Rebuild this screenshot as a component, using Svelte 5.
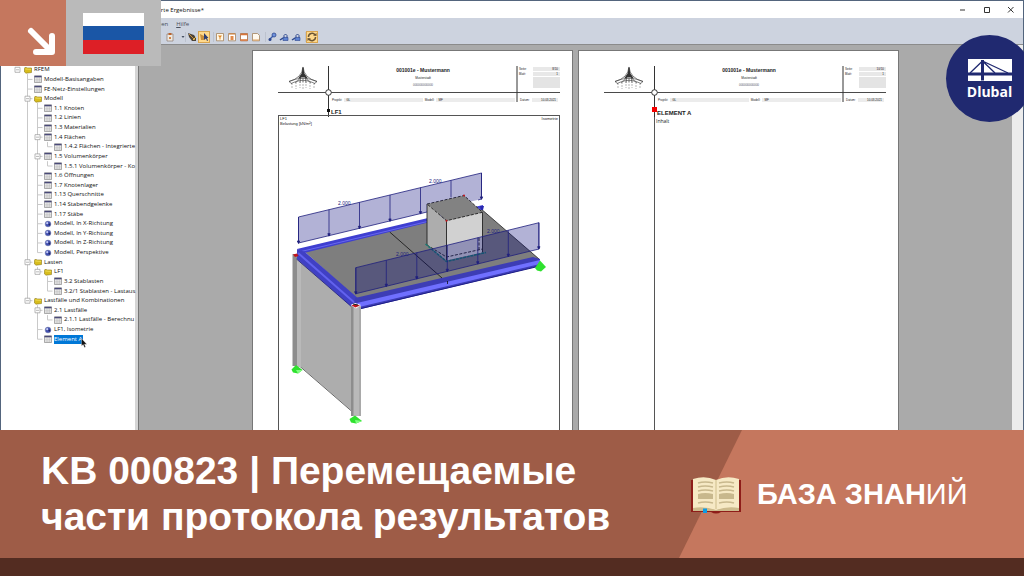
<script>
  const rows = [
    { level: 0, type: 'folder', text: 'RFEM', open: true },
    { level: 1, type: 'table', text: 'Modell-Basisangaben' },
    { level: 1, type: 'table', text: 'FE-Netz-Einstellungen' },
    { level: 1, type: 'folder', text: 'Modell', open: true },
    { level: 2, type: 'table', text: '1.1 Knoten' },
    { level: 2, type: 'table', text: '1.2 Linien' },
    { level: 2, type: 'table', text: '1.3 Materialien' },
    { level: 2, type: 'table', text: '1.4 Flächen', open: true },
    { level: 3, type: 'table', text: '1.4.2 Flächen - Integrierte' },
    { level: 2, type: 'table', text: '1.5 Volumenkörper', open: true },
    { level: 3, type: 'table', text: '1.5.1 Volumenkörper - Ko' },
    { level: 2, type: 'table', text: '1.6 Öffnungen' },
    { level: 2, type: 'table', text: '1.7 Knotenlager' },
    { level: 2, type: 'table', text: '1.13 Querschnitte' },
    { level: 2, type: 'table', text: '1.14 Stabendgelenke' },
    { level: 2, type: 'table', text: '1.17 Stäbe' },
    { level: 2, type: 'view', text: 'Modell, In X-Richtung' },
    { level: 2, type: 'view', text: 'Modell, In Y-Richtung' },
    { level: 2, type: 'view', text: 'Modell, In Z-Richtung' },
    { level: 2, type: 'view', text: 'Modell, Perspektive' },
    { level: 1, type: 'folder', text: 'Lasten', open: true },
    { level: 2, type: 'folder', text: 'LF1', open: true },
    { level: 3, type: 'table', text: '3.2 Stablasten' },
    { level: 3, type: 'table', text: '3.2/1 Stablasten - Lastaus' },
    { level: 1, type: 'folder', text: 'Lastfälle und Kombinationen', open: true },
    { level: 2, type: 'table', text: '2.1 Lastfälle', open: true },
    { level: 3, type: 'table', text: '2.1.1 Lastfälle - Berechnu' },
    { level: 2, type: 'view', text: 'LF1, Isometrie' },
    { level: 2, type: 'table', text: 'Element A', selected: true }
  ];

  // Each row's elbow runs up to its parent row, in row units.
  const parentOf = (i) => {
    let p = i - 1;
    while (p >= 0 && rows[p].level >= rows[i].level) p--;
    return p;
  };

  const tools = [
    { kind: 'clip', name: 'Einfügen' },
    { kind: 'arrow', name: 'Auswahl' },
    { kind: 'gap' },
    { kind: 'pick', name: 'Zeiger' },
    { kind: 'hand', name: 'Verschieben', active: true },
    { kind: 'gap' },
    { kind: 'filter', name: 'Filter' },
    { kind: 'page', name: 'Seite' },
    { kind: 'head', name: 'Kopf' },
    { kind: 'blank', name: 'Leere Seite' },
    { kind: 'gap' },
    { kind: 'link', name: 'Verknüpfen' },
    { kind: 'lock', name: 'Sperren' },
    { kind: 'lock', name: 'Entsperren' },
    { kind: 'gap' },
    { kind: 'sync', name: 'Aktualisieren', active: true }
  ];

  const backDiv = [0, 1, 2, 3, 4, 5, 6].map((i) => ({ x: 298.5 + i * 30.5, y: 217 - i * 7.35 }));
  const frontDiv = [0, 1, 2, 3, 4, 5, 6].map((i) => ({ x: 355.8 + i * 30.5, y: 267.7 - i * 7.5 }));
</script>

{#snippet pageHead(no)}
  <header class="head">
    <svg class="rules" viewBox="0 0 282 52" aria-hidden="true">
      <path d="M0 27.5H282" stroke="#4a4a4a" stroke-width="1" />
      <path d="M50.5 1V52M239 1V37" stroke="#333" stroke-width="1" />
      <circle cx="50.5" cy="27.5" r="2.8" fill="#fff" stroke="#333" />
      <g fill="none" stroke="#333" stroke-width=".6">
        <path d="M25 2Q24 13 11 16.500L14 19M25 2Q26 13 39 16.500L36 19M11 16.500Q25 10 39 16.500M13 18.500Q25 12 37 18.500M25 3Q25 13 17 18M25 3Q25 13 33 18M23 10L22 18M27 10L28 18M25 10V17" />
        <path d="M14 18V23M18 17V24M22 16V23M25 16V25M28 16V23M32 17V24M36 18V23" stroke="#888" stroke-dasharray="2 1" />
      </g>
      <path d="M25 1.500L23.700 8.500L20 13.500L25 12L30 13.500L26.300 8.500Z" fill="#333" />
    </svg>
    <div class="title">
      <strong>001001e - Mustermann</strong>
      <span>Musterstadt</span>
      <span class="phone">000000000000</span>
    </div>
    <dl class="meta">
      <div><dt>Seite:</dt><dd>{no}</dd></div>
      <div><dt>Blatt:</dt><dd>1</dd></div>
      <div class="stamp"></div>
    </dl>
    <div class="project">
      <span>Projekt:</span><span class="fill">GL</span>
      <span>Modell:</span><span class="fill">MF</span>
    </div>
    <div class="date"><span>Datum:</span><span class="fill">10.03.2021</span></div>
  </header>
{/snippet}

<div class="shell">
  <section class="app">
    <div class="titlebar">
      <span class="name">Exportierte Ergebnisse*</span>
      <div class="winbtns">
        <button aria-label="Minimieren"><svg viewBox="0 0 8 8"><path d="M1 4H6" /></svg></button>
        <button aria-label="Maximieren"><svg viewBox="0 0 8 8"><path d="M1.500 1.500H6.500V6.500H1.500Z" /></svg></button>
        <button aria-label="Schließen"><svg viewBox="0 0 8 8"><path d="M1 1L6.500 6.500M6.500 1L1 6.500" /></svg></button>
      </div>
    </div>
    <nav class="menu"><a href="#extras">Extras öffnen</a><a href="#hilfe"><u>H</u>ilfe</a></nav>
    <div class="toolbar">
      {#each tools as t}
        {#if t.kind === 'gap'}
          <i class="sep"></i>
        {:else}
          <button class:active={t.active} class:narrow={t.kind === 'arrow'} aria-label={t.name}>
            <svg viewBox="0 0 10 10">
              {#if t.kind === 'clip'}
                <path d="M2 2H8V9H2Z" fill="#eee9e2" stroke="#8b7a6d" stroke-width=".7" /><path d="M3.500 1H6.500V3H3.500Z" fill="#b9622d" /><path d="M4 5H6V7H4Z" fill="#d08447" />
              {:else if t.kind === 'arrow'}
                <path d="M1.500 4H4.500L3 6Z" fill="#444e60" />
              {:else if t.kind === 'pick'}
                <path d="M1 1L7 3L9 6V9H5L2 5Z" fill="#4b4338" /><path d="M2 2L8 8" stroke="#c98f3c" /><path d="M6 8L9 5" stroke="#e9c04f" />
              {:else if t.kind === 'hand'}
                <path d="M1 2L5 4V8H2Z" fill="#c98f3c" /><path d="M5 1V8L7 6.500L8 9L9 8.500L8 6H9.500Z" fill="#2d3c71" />
              {:else if t.kind === 'filter'}
                <path d="M1.500 1.500H8.500V8.800H1.500Z" fill="#fff7e6" stroke="#a3835e" stroke-width=".8" /><path d="M3 3.500H7L5.500 5.500V7.500H4.500V5.500Z" fill="#e08a2a" />
              {:else if t.kind === 'page'}
                <path d="M1.500 1.500H8.500V8.800H1.500Z" fill="#fff" stroke="#a3835e" stroke-width=".8" /><path d="M3.500 4H6.500V8H3.500Z" fill="#e08a4a" /><path d="M2 2H8" stroke="#cf7a31" />
              {:else if t.kind === 'head'}
                <path d="M1.500 1.500H8.500V8.800H1.500Z" fill="#fff" stroke="#a3663e" stroke-width=".8" /><path d="M1.500 2.500H8.500M1.500 8H8.500" stroke="#d9753a" stroke-width="1.500" />
              {:else if t.kind === 'blank'}
                <path d="M1.500 1.500H6.500L8.500 3.500V8.800H1.500Z" fill="#fff9ef" stroke="#a3835e" stroke-width=".8" /><path d="M2 8H8" stroke="#e3a35e" />
              {:else if t.kind === 'link'}
                <path d="M2.500 7.500L7.500 2.500" stroke="#3d5fae" stroke-width="1.500" /><circle cx="7" cy="3" r="2" fill="#6f92dc" stroke="#2d478e" stroke-width=".8" /><circle cx="3" cy="7.500" r="1.500" fill="#2d478e" />
              {:else if t.kind === 'lock'}
                <path d="M5 6V3.500Q6.500 .5 8 3.500V6" fill="none" stroke="#2d478e" /><path d="M4 5.500H9V8.500H4Z" fill="#5e83d2" stroke="#2d478e" stroke-width=".6" /><path d="M1 8L4 6" stroke="#2d478e" stroke-width="1.500" />
              {:else}
                <path d="M1.500 5A3.500 3.500 0 0 1 8 3M8.500 5A3.500 3.500 0 0 1 2 7" fill="none" stroke="#6c5636" stroke-width="1.500" /><path d="M6 3.500L9.500 4V1ZM4 6.500L.5 6V9Z" fill="#6c5636" />
              {/if}
            </svg>
          </button>
        {/if}
      {/each}
    </div>
    <div class="work">
      <aside class="side">
        <div class="tree">
          <svg class="lines" viewBox="0 0 134 279" aria-hidden="true">
            {#each rows as r, i}
              {#if i > 0}
                <path d="M{16.5 + 10 * (r.level - 1) + 10} {((parentOf(i) + 1) * 279) / 29}V{((i + 0.5) * 279) / 29}h5" />
              {/if}
            {/each}
            {#each rows as r, i}
              {#if r.open}
                <path class="box" d="M{14 + 10 * r.level} {((i + 0.5) * 279) / 29 - 2.5}h5v5h-5zm1 2.500h3" />
              {/if}
            {/each}
          </svg>
          <ul>
            {#each rows as r}
              <li style:padding-left="{23 + 10 * r.level}px">
                <svg class="ico" viewBox="0 0 8 8" aria-hidden="true">
                  {#if r.type === 'folder'}
                    <path d="M.5 2.500Q.5 1 2 1.500L3.500 2H7.500V6.500L2 7.200L.5 6Z" fill="#d8bd1c" stroke="#8d7a1c" stroke-width=".6" /><path d="M1.500 3L7 3.300" stroke="#f6e66c" stroke-width=".8" />
                  {:else if r.type === 'table'}
                    <path d="M.5 .8H7.500V7.500H.5Z" fill="#efefef" stroke="#777" stroke-width=".6" /><path d="M.5 1.600H7.500" stroke="#4a4a78" stroke-width="1.500" /><path d="M3 2V7.500M5.300 2V7.500M.5 4.300H7.500M.5 6H7.500" stroke="#a5a5a5" stroke-width=".4" />
                  {:else}
                    <circle cx="4" cy="4" r="2.900" fill="#3e4db0" stroke="#8d93b5" stroke-width=".6" /><circle cx="3.200" cy="3.200" r="1.100" fill="#c3caf3" /><path d="M4 4L6.500 3.500L6 6Z" fill="#20275e" />
                  {/if}
                </svg>
                <span class:selected={r.selected}>{r.text}</span>
              </li>
            {/each}
          </ul>
          <svg class="cursor" viewBox="0 0 6 10" aria-hidden="true"><path d="M.5 .5V8L2.200 6.500L3.400 9.500L4.600 9L3.500 6.200H5.800Z" fill="#111" stroke="#fff" stroke-width=".3" /></svg>
        </div>
      </aside>
      <main class="preview">
        <article class="page">
          {@render pageHead('8/10')}
          <h2 class="section first"><i class="pin"></i>LF1</h2>
          <div class="frame">
            <div class="caption"><span>LF1<br />Belastung [kN/m²]</span><span>Isometrie</span></div>
            <svg class="model" viewBox="279 116 280 314" role="img" aria-label="LF1">
              <path d="M293 254H302L352 305V411L300 366L293 366Z" fill="#adadad" />
              <path d="M300 366.500L352 411.500" stroke="#444" stroke-width=".8" />
              <path d="M292.500 254H297V366H292.500Z" fill="#8d8d8d" /><path d="M297 256H301V367H297Z" fill="#b9b9b9" />
              <path d="M304 251L480 208L539 259L358 300Z" fill="#7e7e7e" />
              <path d="M480 208L539 259" stroke="#222" stroke-width=".8" />
              <path d="M389.700 232L442 278" stroke="#111" stroke-width=".8" />
              <path d="M297 249L483 205V209L304 253Z" fill="#3f3fd0" /><path d="M299 252L480 209" stroke="#6868ee" stroke-width="1" />
              <path d="M297 249L305 252L360 300L353 308L297 259Z" fill="#4040c4" /><path d="M298 253L356 304" stroke="#6262ee" stroke-width="2" /><path d="M296.500 259L353 308" stroke="#17177d" stroke-width=".8" />
              <path d="M355 298L533 257L540 259V266L361 309L354 305Z" fill="#3d3db5" />
              <path d="M357 303L540 260V264L359 307Z" fill="#7070ff" /><path d="M361 308.500L540 266" stroke="#1d1d86" stroke-width="1" />
              <path d="M447.500 281V284" stroke="#111" stroke-width=".8" />
              <path d="M427 204L446.500 220.700V260.500L427 245Z" fill="#adadad" /><path d="M446.500 220.700L482.500 212.300V252.500L446.500 260.500Z" fill="#d1d1d1" />
              <path d="M427 204L464 195.500L482.500 212.300L446.500 220.700Z" fill="#828282" />
              <g fill="none" stroke="#222" stroke-width=".9"><path d="M427 204V245M446.500 220.700V260.500M482.500 212.300V252.500" /><path d="M427 204L464 195.500L482.500 212.300L446.500 220.700ZM427 245L446.500 257L482.500 249M479 238V250" stroke-dasharray="3 1.500" /></g>
              <path d="M425.500 244L446.500 261.500L486 252.500" fill="none" stroke="#1e7771" stroke-width="1.500" stroke-dasharray="3 .7" />
              <mask id="behind"><path d="M278 116H558V430H278Z" fill="#fff" /><path d="M427 204L464 195.500L482.500 212.300V252H427Z" fill="#000" /></mask>
              <path d="M298.500 217L481.500 173V199L298.500 243Z" class="load" mask="url(#behind)" />
              <path d="M355.800 267.700L539 222.700V249L355.800 293.700Z" class="load" />
              <g class="force">
                <path d="M298.500 243V217L481.500 173V199" fill="none" />
                <path d="M355.800 293.700V267.700L539 222.700V249Z" fill="none" />
                <path d="M298.500 243L427 212M478 200L481.500 199" fill="none" />
                {#each backDiv as d, i}
                  <path d="M{d.x} {d.y}v{i === 5 ? 17 : 26}" />{#if i !== 5}<path d="M{d.x - 1.2} {d.y + 24}h2.400l-1.200 2.500z" />{/if}
                {/each}
                {#each frontDiv as d}
                  <path d="M{d.x} {d.y}v26" /><path d="M{d.x - 1.2} {d.y + 24}h2.400l-1.200 2.500z" />
                {/each}
              </g>
              <g class="val"><text x="338" y="205">2.000</text><text x="429" y="183">2.000</text><text x="396" y="256">2.000</text><text x="487" y="233">2.000</text></g>
              <path d="M480 206h4l-1 4h-2z" fill="#2828b0" />
              <path d="M351 306H361V416H351Z" fill="#b9b9b9" /><path d="M351 306H353.500V416H351Z" fill="#8d8d8d" /><path d="M360 307V416" stroke="#999" />
              <path d="M350.500 305L355 303L361 305L356 308.500Z" fill="#fff" /><path d="M351.500 305.500L355 304L360 305.500L355.500 307.500ZM293 254.500L297 253.500L298.500 256L295 257Z" fill="#c4141b" /><path d="M353 304L358 305" stroke="#222" />
              <g fill="#2fe12f"><path d="M291.500 369.500L296 365L302.500 370L298 373.500L293 372.500Z" /><path d="M349.500 419L355 415.500L362 421L356 423.500L351 422.500Z" /><path d="M535 268L540 260.500L546 267L541 271.500L537 270.500Z" /></g>
              <g fill="#81ff81"><path d="M296 370L302.500 370L298 373.500Z" /><path d="M355 420L362 421L356 423.500Z" /></g>
              <g fill="#c4141b"><circle cx="464" cy="195.500" r="1" /><circle cx="446.500" cy="220.700" r="1" /></g>
            </svg>
          </div>
        </article>
        <article class="page second">
          {@render pageHead('10/10')}
          <div class="body">
            <h2 class="section"><i class="pin red"></i>ELEMENT A</h2>
            <p>Inhalt</p>
          </div>
        </article>
      </main>
      <div class="scroll"></div>
    </div>
    <div class="corner">
      <div class="go"><svg viewBox="0 0 30 30" aria-hidden="true"><path d="M5 5L24 24M10 26H26V10" fill="none" stroke="#fff" stroke-width="6" stroke-linecap="round" stroke-linejoin="round" /></svg></div>
      <div class="flagbox"><div class="flag"><i></i><i></i><i></i></div></div>
    </div>
    <div class="logo">
      <svg viewBox="0 0 44 22" aria-hidden="true"><path d="M0 0H44V22H0Z" fill="#fff" /><g stroke="#202970" fill="none"><path d="M0 15H44" stroke-width="3" /><path d="M14.500 1V21.500" stroke-width="3" /><path d="M14.500 2L2 14M14.500 2L27 14M14.500 2L40 14" stroke-width="1.300" /></g></svg>
      <strong>Dlubal</strong>
    </div>
  </section>

  <section class="banner">
    <h1>KB 000823 | Перемещаемые<br />части протокола результатов</h1>
    <div class="kb">
      <svg viewBox="0 0 50 37" aria-hidden="true">
        <path d="M0 3H50V35H30Q25 38 20 35H0Z" fill="#8e1d19" />
        <path d="M2 2Q14 -2 25 3Q36 -2 48 2V33H2Z" fill="#f6e9c5" />
        <path d="M2 31Q14 29 25 33Q36 29 48 31V34H2Z" fill="#cdbb8d" />
        <path d="M25 3V32" stroke="#e2d3a8" stroke-width="2" />
        <g stroke="#c8b88d" stroke-width="1.500" fill="none"><path d="M7 6Q14 4 22 6M7 10Q14 8 22 10M7 14Q14 12 22 14M7 26Q14 24 22 26M28 6Q36 4 43 6M28 10Q36 8 43 10M28 14Q36 12 43 14M28 26Q36 24 43 26" /></g>
        <path d="M7 17Q14 15 22 17V22H7ZM28 17Q36 15 43 17V22H28Z" fill="#c8b88d" />
        <path d="M12 31.500H16V36H12Z" fill="#0d9be5" />
      </svg>
      <span>БАЗА ЗНАН<b>ИЙ</b></span>
    </div>
  </section>
  <div class="strip"></div>
</div>

<style>
  :global(body) { margin: 0; }
  * { box-sizing: border-box; }
  .shell { min-height: 100vh; display: flex; flex-direction: column; font-family: "Liberation Sans", Arial, sans-serif; }
  button { border: 0; padding: 0; background: none; display: grid; place-items: center; }
  h1, h2, p, dl, dd, ul { margin: 0; padding: 0; }

  .app { position: relative; flex: 1; display: flex; flex-direction: column; overflow: hidden; background: #53657d; padding: 1px 1px 0; font-family: "Open Sans", "Noto Sans", sans-serif; }
  .titlebar { height: 17px; flex: none; display: flex; justify-content: space-between; align-items: center; background: #fff; padding: 0 8px 0 123px; font-size: 6px; color: #111; }
  .name { width: 80px; text-align: right; white-space: nowrap; }
  .winbtns { display: flex; gap: 16px; }
  .winbtns button { width: 8px; height: 8px; }
  .winbtns svg { width: 8px; height: 8px; fill: none; stroke: #333; stroke-width: 1; }
  .menu { height: 11px; flex: none; display: flex; align-items: center; gap: 8px; padding-left: 130px; font-size: 6px; background: #cdd3df; }
  .menu a { color: #4a4f5c; text-decoration: none; }
  .toolbar { height: 16px; flex: none; display: flex; align-items: center; padding-left: 163px; border-bottom: 1px solid #8b8b8b; background: #cdd3df; }
  .toolbar button { width: 12px; height: 12px; }
  .toolbar .narrow { width: 6px; }
  .toolbar .narrow svg { margin-left: 4px; }
  .toolbar button svg { width: 10px; height: 10px; flex: none; }
  .toolbar .active { background: #ffd98c; border: 1px solid #d9a550; }
  .sep { width: 4px; height: 10px; border-right: 1px solid #bcc2ce; }

  .work { flex: 1; display: flex; min-height: 0; background: #aaa; }
  .side { width: 138px; flex: none; background: #fff; border-right: 1px solid #777; box-shadow: inset -3px 0 #d5d5d5; padding-right: 3px; padding-top: 20px; overflow: hidden; }
  .tree { position: relative; height: 279px; font-size: 6px; color: #111; }
  .tree ul { position: relative; height: 100%; display: grid; grid-auto-rows: 1fr; list-style: none; }
  .tree li { display: flex; align-items: center; gap: 2px; min-width: 0; min-height: 0; white-space: nowrap; line-height: 9px; }
  .tree .ico { width: 8px; height: 8px; flex: none; }
  .tree .selected { background: #0078d7; color: #fff; padding-right: 1px; }
  .lines { position: absolute; left: 0; top: 0; width: 134px; height: 279px; fill: none; stroke: #c9c9c9; stroke-width: 1; }
  .lines .box { fill: #fff; stroke: #999; stroke-width: .7; }
  .cursor { position: absolute; left: 80px; top: 273px; width: 6px; height: 10px; }

  .preview { flex: 1; display: flex; justify-content: center; gap: 5px; padding-top: 5px; min-width: 0; overflow: hidden; }
  .page { width: 321px; flex: none; background: #fff; border: 1px solid #777; border-bottom: 0; padding: 14px 12px 0 25px; display: flex; flex-direction: column; font-family: "Liberation Sans", Arial, sans-serif; color: #222; }
  .scroll { width: 11px; background: #ececec; flex: none; }
  .head { position: relative; flex: none; height: 40px; display: grid; grid-template-columns: 1fr 43px; grid-template-rows: 30px 10px; padding-left: 51px; font-size: 3px; line-height: 4px; }
  .rules { position: absolute; left: 0; top: 0; width: 282px; height: 52px; }
  .title { display: flex; flex-direction: column; align-items: center; gap: 3px; padding-top: 3px; }
  .title strong { font-size: 5px; line-height: 5px; }
  .title .phone { color: #556; }
  .meta { display: flex; flex-direction: column; gap: 1px; padding: 2px 0 0 2px; }
  .meta div { display: flex; justify-content: space-between; }
  .meta dd { background: #e8e8e8; width: 27px; text-align: right; padding-right: 2px; }
  .meta .stamp { height: 11px; background: #e4e4e4; margin-left: 14px; }
  .project, .date { display: flex; gap: 2px; padding: 3px 2px 0 3px; height: 7px; position: relative; }
  .fill { flex: 1; background: #ececec; padding-left: 2px; }
  .date .fill { text-align: right; padding-right: 2px; }
  .section { font-size: 6px; line-height: 6px; font-weight: 700; position: relative; padding-left: 53px; }
  .first { margin-top: 4px; }
  .pin { position: absolute; left: 49px; top: 0; width: 3px; height: 3px; background: #111; }
  .red { left: -3px; top: -3px; width: 5px; height: 5px; background: #f40000; }
  .frame { position: relative; flex: 1; border: 1px solid #555; border-bottom: 0; min-height: 0; }
  .caption { position: absolute; left: 0; right: 0; top: 0; display: flex; justify-content: space-between; font-size: 4px; line-height: 5px; padding: 0 1px; }
  .model { display: block; width: 100%; }
  .load { fill: rgba(0, 0, 120, .3); }
  .force { stroke: #20207d; stroke-width: .8; fill: #20207d; }
  .val { font-size: 5px; fill: #20207d; }
  .second .body { flex: 1; margin-left: 50px; border-left: 1px solid #555; padding-top: 5px; }
  .body .section { padding-left: 2px; }
  .body p { font-size: 5px; line-height: 11px; padding-left: 1px; font-family: "Open Sans", sans-serif; }

  .corner { position: absolute; left: 0; top: 0; display: flex; }
  .go { width: 66px; height: 66px; background: #c5775e; display: grid; place-items: end; padding: 0 10px 10px 0; }
  .go svg { width: 30px; height: 30px; }
  .flagbox { width: 95px; height: 66px; background: #bababa; display: grid; place-items: center; }
  .flag { width: 61px; height: 41px; display: grid; grid-template-rows: repeat(3, 1fr); }
  .flag i:nth-child(1) { background: #fff; }
  .flag i:nth-child(2) { background: #1a56a6; }
  .flag i:nth-child(3) { background: #dd1f26; }
  .logo { position: absolute; right: -9px; top: 35px; width: 87px; height: 87px; border-radius: 50%; background: #202970; color: #fff; display: flex; flex-direction: column; align-items: center; padding-top: 24px; }
  .logo svg { width: 44px; height: 22px; flex: none; }
  .logo strong { font-size: 14px; line-height: 22px; }

  .banner { flex: none; min-height: 128px; display: flex; background: #9e5c47; color: #fff; }
  h1 { flex: 1; align-self: center; padding-left: 41px; font-size: 39px; line-height: 46px; white-space: nowrap; }
  .kb { width: 345px; flex: none; display: flex; align-items: center; gap: 16px; padding: 2px 0 0 12px; position: relative; font-size: 29px; line-height: 36px; font-weight: 700; white-space: nowrap; isolation: isolate; }
  .kb::before { content: ""; position: absolute; inset: 0; z-index: -1; background: #c5775e; clip-path: polygon(63px 0, 100% 0, 100% 100%, 0 100%); }
  .kb svg { width: 50px; height: 37px; flex: none; }
  .kb span { padding-bottom: 2px; }
  .kb b { font-weight: 400; }
  .strip { flex: none; height: 18px; background: #532c21; }
</style>
